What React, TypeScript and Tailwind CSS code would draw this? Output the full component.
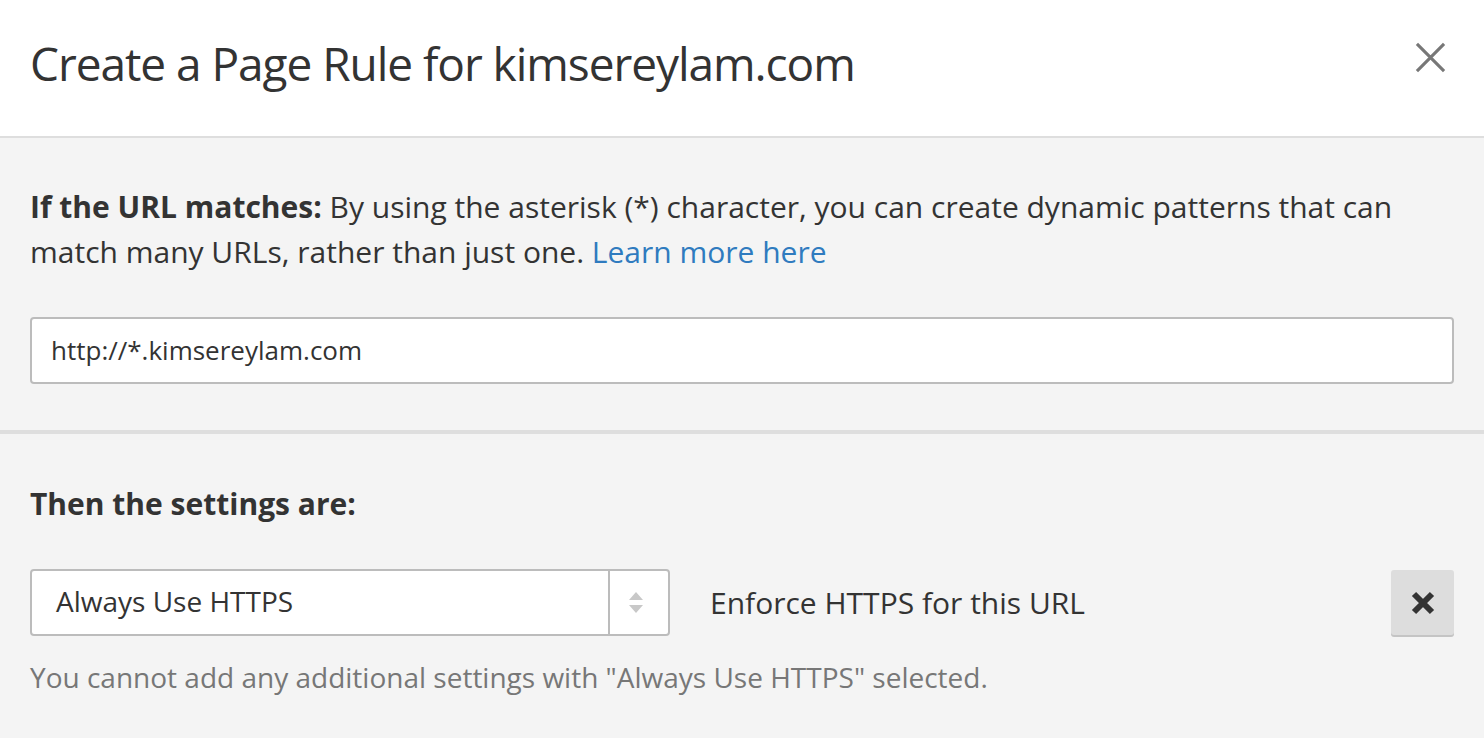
const font = { fontFamily: '"Open Sans", "Liberation Sans", sans-serif' };

export default function App() {
  return (
    <div className="w-[1484px] h-[738px] overflow-hidden bg-[#f4f4f4] text-[#333]" style={font}>
      <div className="flex h-[138px] items-center justify-between border-b-2 border-[#dedede] bg-white pl-[30px] pr-[36px]">
        <h1 className="pb-[10px] text-[46px] font-normal leading-none tracking-[-1.05px] text-[#333]">
          Create a Page Rule for kimsereylam.com
        </h1>
        <button className="mb-[22px] flex h-[36px] w-[36px] items-center justify-center text-[#777]">
          <svg width="31" height="31" viewBox="0 0 32 32" fill="none" stroke="currentColor" strokeWidth="3.2">
            <path d="M2 2L30 30M30 2L2 30" />
          </svg>
        </button>
      </div>

      <div className="border-b-4 border-[#dedede] px-[30px] pt-[46px] pb-[46px]">
        <p className="max-w-[1400px] text-[30px] leading-[45px]">
          <span className="font-bold">If the URL matches:</span> By using the asterisk (*) character, you can create
          dynamic patterns that can match many URLs, rather than just one.{" "}
          <a className="text-[#2f7bbf]">Learn more here</a>
        </p>
        <div className="mt-[43px] flex h-[67px] items-center rounded-[4px] border-2 border-[#bcbcbc] bg-white px-[19px] text-[26px] text-[#333]">
          http://*.kimsereylam.com
        </div>
      </div>

      <div className="px-[30px] pt-[47px]">
        <h2 className="text-[30px] leading-[45px] font-bold">Then the settings are:</h2>
        <div className="mt-[43px] flex items-center">
          <div className="flex h-[67px] w-[640px] rounded-[4px] border-2 border-[#bcbcbc] bg-white">
            <div className="flex flex-1 items-center pl-[24px] pb-[4px] text-[28px]">Always Use HTTPS</div>
            <div className="flex w-[60px] flex-col items-center justify-center gap-[5px] border-l-2 border-[#bcbcbc] pr-[6px]">
              <svg width="14" height="8" viewBox="0 0 14 8"><path d="M7 0L14 8H0z" fill="#c8c8c8" /></svg>
              <svg width="14" height="8" viewBox="0 0 14 8"><path d="M0 0H14L7 8z" fill="#c8c8c8" /></svg>
            </div>
          </div>
          <div className="ml-[40px] flex-1 text-[30px]">Enforce HTTPS for this URL</div>
          <button className="flex h-[65px] w-[63px] items-center justify-center rounded-[3px] bg-[#dddddd] shadow-[0_2px_0_#c4c4c4]">
            <svg width="24" height="24" viewBox="0 0 24 24" fill="none" stroke="#333" strokeWidth="6" strokeLinecap="butt">
              <path d="M3 3L21 21M21 3L3 21" />
            </svg>
          </button>
        </div>
        <p className="mt-[19px] text-[28px] leading-[45px] text-[#777]">
          You cannot add any additional settings with "Always Use HTTPS" selected.
        </p>
      </div>
    </div>
  );
}
